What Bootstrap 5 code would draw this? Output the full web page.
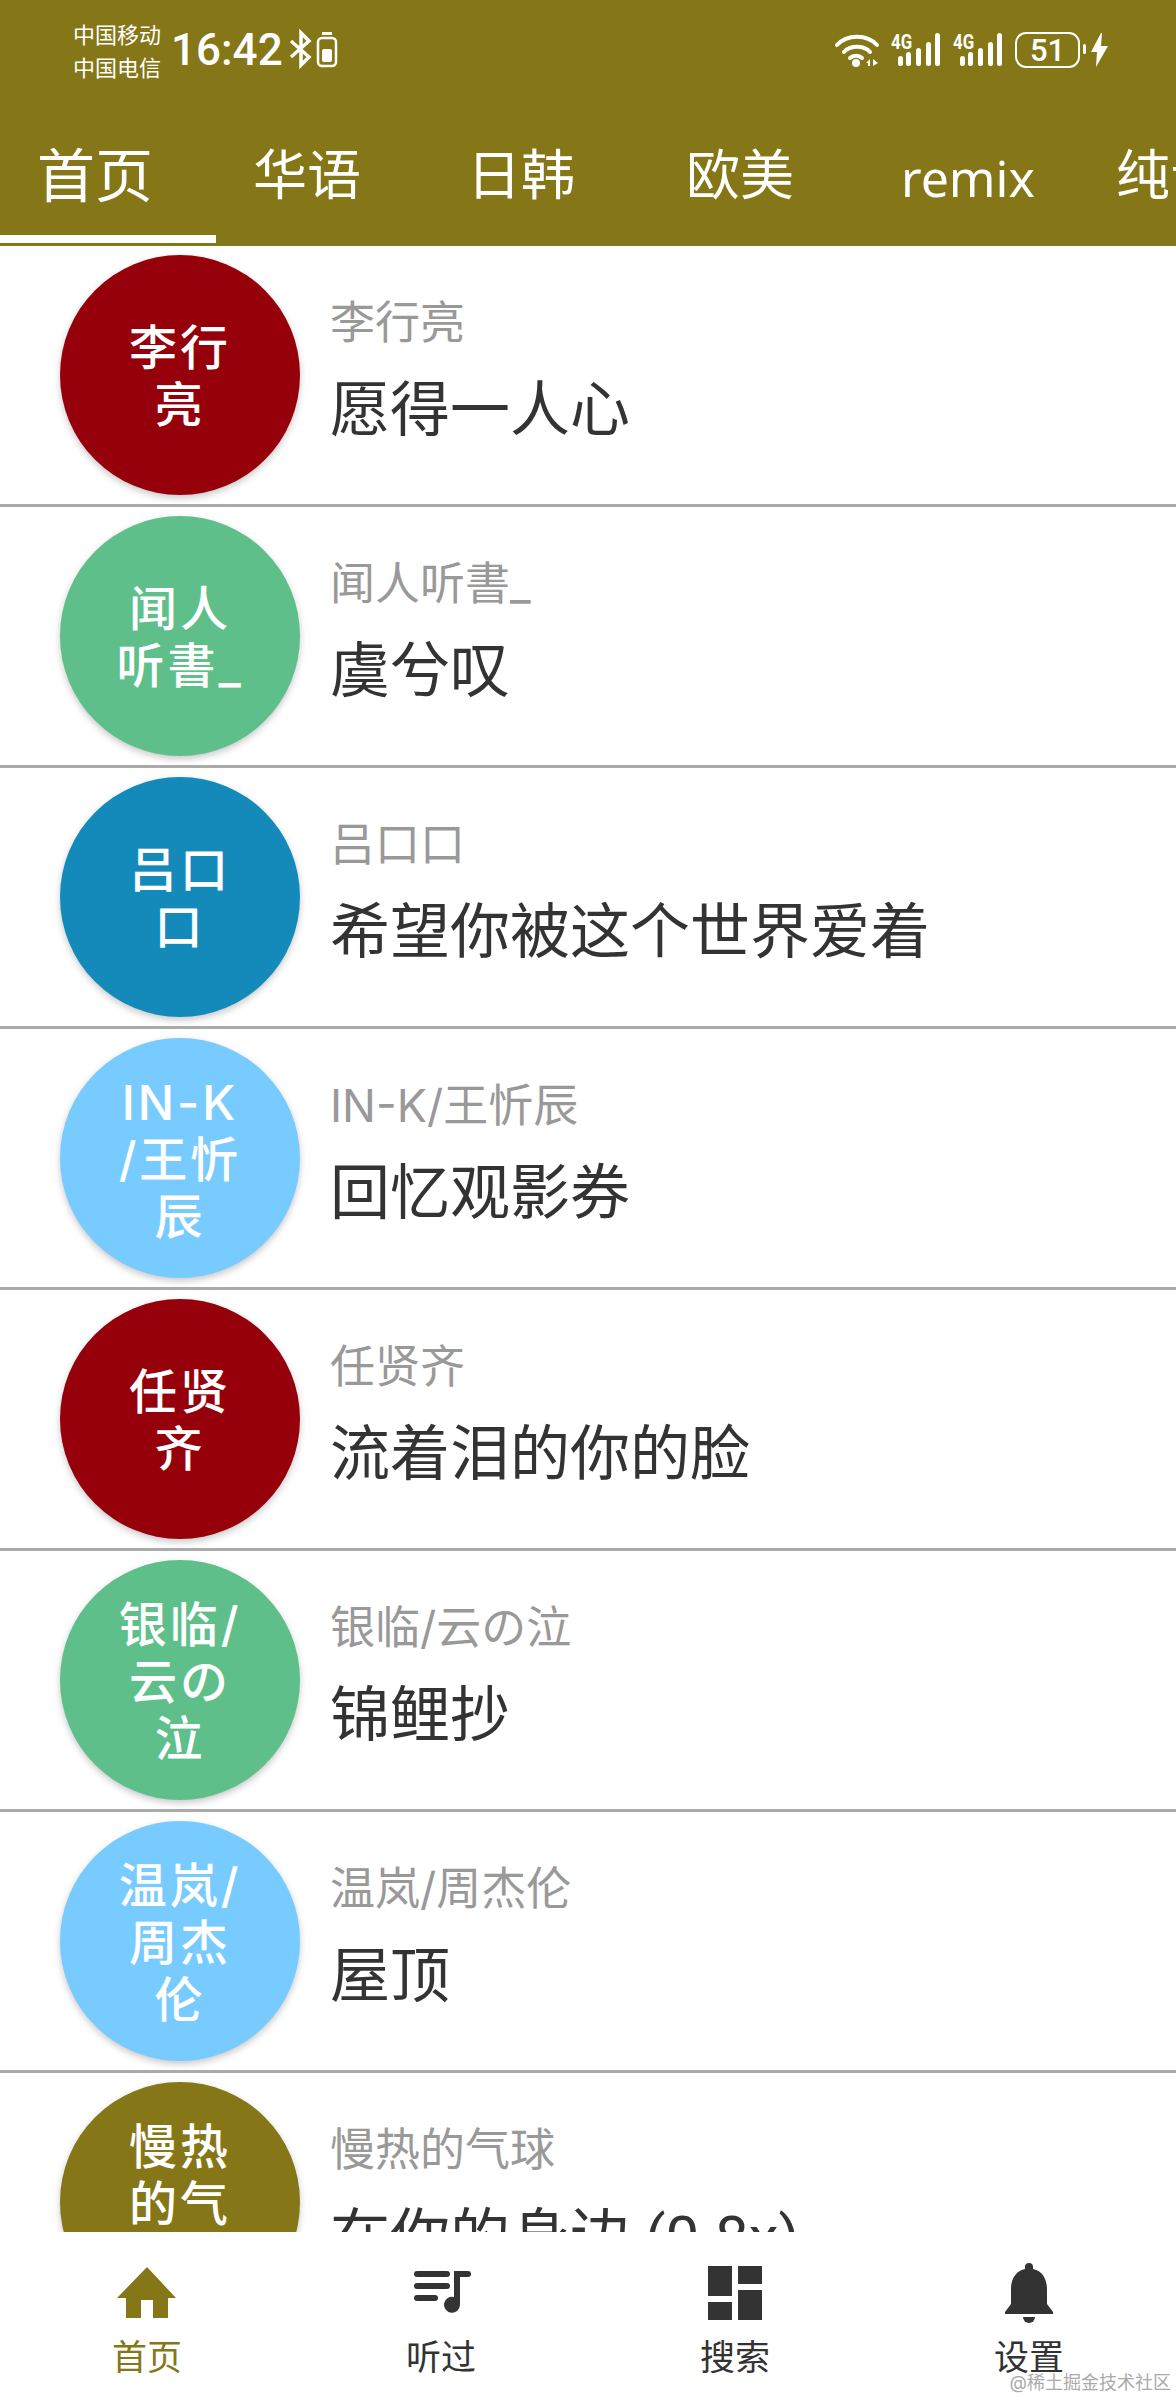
<!DOCTYPE html>
<html lang="zh-CN">
<head>
    <meta charset="UTF-8">
    <meta name="viewport" content="width=device-width, initial-scale=1.0">
    <title>首页</title>
    <link href="https://cdn.jsdelivr.net/npm/bootstrap@5.3.0/dist/css/bootstrap.min.css" rel="stylesheet">
    <style>
        body { font-family: "Inter", "Noto Sans CJK SC", sans-serif; background: #fff; color: #333; }
        .app-shell { width: 1176px; height: 2400px; }
        .top-head { background: #857717; color: #fff; height: 246px; flex: none; }
        .status-row { height: 100px; padding-left: 73px; padding-top: 19px; }
        .carrier { font-size: 22px; line-height: 33px; width: 98px; }
        .clock { font-family: "Roboto", sans-serif; font-size: 44px; font-weight: 500; line-height: 1; width: 116px; margin-top: 9px; }
        .status-right { margin-left: auto; margin-right: 68px; margin-top: 13px; gap: 12px; }
        .sig { position: relative; width: 50px; height: 36px; }
        .sig svg { position: absolute; left: 0; top: 0; }
        .sig-label { position: absolute; left: 0; top: 0; font-family: "Roboto", sans-serif; font-size: 21px; font-weight: 700; line-height: 1; transform: scaleX(.8); transform-origin: left top; }
        .batt { width: 65px; height: 36px; border: 2.5px solid #fff; border-radius: 11px; font-family: "Roboto", sans-serif; font-size: 31px; font-weight: 500; line-height: 1; }
        .bolt-ico { margin-left: -9px; }
        .tab-rail { height: 146px; white-space: nowrap; }
        .tab-item { font-size: 54px; line-height: 1; height: 143px; padding-top: 49px; position: relative; flex: none; }
        .tab-item.on { font-size: 58px; padding-top: 47px; padding-left: 37px; width: 216px; }
        .tab-item.on::after { content: ""; position: absolute; left: 0; right: 0; bottom: 0; height: 8px; background: #fff; }
        .tab-hua { margin-left: 37px; width: 214px; }
        .tab-ri { width: 219px; }
        .tab-ou { width: 215px; }
        .tab-mix { width: 215px; font-family: "Noto Sans", sans-serif; font-size: 50px; padding-top: 53px; }
        .song-list { min-height: 0; }
        .song-row { height: 261px; padding: 9px 0 9px 60px; border-bottom: 3px solid #aaa; flex: none; }
        .avatar-disc { width: 240px; height: 240px; padding-top: 2px; border-radius: 50%; color: #fff; font-size: 48px; font-weight: 500; line-height: 57px; letter-spacing: 3px; text-align: center; box-shadow: 0 3px 7px rgba(0,0,0,.22); flex: none; }
        .disc-red { background: #96000b; }
        .disc-green { background: #5ebf8b; }
        .disc-blue { background: #148abb; }
        .disc-sky { background: #78cbff; }
        .disc-olive { background: #857717; }
        .song-text { margin-left: 30px; padding-bottom: 8px; }
        .song-artist { font-size: 45px; line-height: 60px; color: #999; margin-bottom: 20px; }
        .song-name { font-family: "Roboto", "Noto Sans CJK SC", sans-serif; font-size: 60px; line-height: 76px; color: #333; }
        .bottom-nav { height: 168px; flex: none; background: #fff; position: relative; }
        .nav-cell { width: 294px; height: 168px; }
        .nav-ico { height: 60px; margin-top: 31px; }
        .music-ico { margin-left: 3px; }
        .nav-text { font-size: 35px; line-height: 40px; margin-top: 14px; color: #333; }
        .nav-cell.on .nav-text { color: #857717; }
        .mark-water { position: absolute; right: 5px; bottom: 6px; font-size: 18px; line-height: 22px; color: #aaa; }
    </style>
</head>
<body>
    <div class="app-shell d-flex flex-column overflow-hidden">
        <header class="top-head">
            <div class="status-row d-flex">
                <div class="carrier">中国移动<br>中国电信</div>
                <div class="clock">16:42</div>
                <svg width="52" height="44" viewBox="0 0 52 44" class="mt-2" fill="none" stroke="#fff">
                    <path d="M4 14 L22 30 L14 38 V6 L22 14 L4 30" stroke-width="3.5"/>
                    <rect x="31" y="11" width="18" height="28" rx="4" stroke-width="2.5"/>
                    <rect x="35" y="5" width="10" height="3" fill="#fff" stroke="none"/>
                    <rect x="35" y="22" width="10" height="13" rx="2" fill="#fff" stroke="none"/>
                </svg>
                <div class="status-right d-flex align-items-start">
                    <svg width="44" height="36" viewBox="0 0 44 36" fill="none" stroke="#fff" stroke-width="4" stroke-linecap="round">
                        <path d="M2 13 C12 2 32 2 42 13"/>
                        <path d="M9 20 C15 13 29 13 35 20"/>
                        <path d="M15 26 C18 23 24 23 27 26"/>
                        <circle cx="21" cy="31" r="4" fill="#fff" stroke="none"/>
                        <path d="M31 31 L35 27 V34 H33 V31Z M38 27 L43 31 L38 34Z" fill="#fff" stroke="none"/>
                    </svg>
                    <div class="sig">
                        <svg width="50" height="36" viewBox="0 0 50 36" fill="#fff">
                            <rect x="7" y="24" width="5" height="10" rx="2.5"/>
                            <rect x="15" y="20" width="5" height="14" rx="2.5"/>
                            <rect x="25" y="16" width="5" height="18" rx="2.5"/>
                            <rect x="35" y="10" width="5" height="24" rx="2.5"/>
                            <rect x="44" y="1" width="5" height="33" rx="2.5"/>
                        </svg>
                        <span class="sig-label">4G</span>
                    </div>
                    <div class="sig">
                        <svg width="50" height="36" viewBox="0 0 50 36" fill="#fff">
                            <rect x="7" y="24" width="5" height="10" rx="2.5"/>
                            <rect x="15" y="20" width="5" height="14" rx="2.5"/>
                            <rect x="25" y="16" width="5" height="18" rx="2.5"/>
                            <rect x="35" y="10" width="5" height="24" rx="2.5"/>
                            <rect x="44" y="1" width="5" height="33" rx="2.5"/>
                        </svg>
                        <span class="sig-label">4G</span>
                    </div>
                    <div class="batt d-flex align-items-center justify-content-center">51</div>
                    <svg class="bolt-ico" width="25" height="36" viewBox="0 0 25 36" fill="#fff">
                        <rect x="0" y="12" width="3" height="10" rx="1.5"/>
                        <path d="M18 1 L8 20 H14 L13 35 L25 14 H18 L19 1Z"/>
                    </svg>
                </div>
            </div>
            <nav class="tab-rail d-flex overflow-hidden">
                <div class="tab-item on">首页</div>
                <div class="tab-item tab-hua">华语</div>
                <div class="tab-item tab-ri">日韩</div>
                <div class="tab-item tab-ou">欧美</div>
                <div class="tab-item tab-mix">remix</div>
                <div class="tab-item">纯音乐</div>
            </nav>
        </header>

        <main class="song-list flex-grow-1 overflow-hidden d-flex flex-column">
            <div class="song-row d-flex align-items-center">
                <div class="avatar-disc disc-red d-flex align-items-center justify-content-center"><span>李行<br>亮</span></div>
                <div class="song-text"><div class="song-artist">李行亮</div><div class="song-name">愿得一人心</div></div>
            </div>
            <div class="song-row d-flex align-items-center">
                <div class="avatar-disc disc-green d-flex align-items-center justify-content-center"><span>闻人<br>听書_</span></div>
                <div class="song-text"><div class="song-artist">闻人听書_</div><div class="song-name">虞兮叹</div></div>
            </div>
            <div class="song-row d-flex align-items-center">
                <div class="avatar-disc disc-blue d-flex align-items-center justify-content-center"><span>吕口<br>口</span></div>
                <div class="song-text"><div class="song-artist">吕口口</div><div class="song-name">希望你被这个世界爱着</div></div>
            </div>
            <div class="song-row d-flex align-items-center">
                <div class="avatar-disc disc-sky d-flex align-items-center justify-content-center"><span>IN-K<br>/王忻<br>辰</span></div>
                <div class="song-text"><div class="song-artist">IN-K/王忻辰</div><div class="song-name">回忆观影券</div></div>
            </div>
            <div class="song-row d-flex align-items-center">
                <div class="avatar-disc disc-red d-flex align-items-center justify-content-center"><span>任贤<br>齐</span></div>
                <div class="song-text"><div class="song-artist">任贤齐</div><div class="song-name">流着泪的你的脸</div></div>
            </div>
            <div class="song-row d-flex align-items-center">
                <div class="avatar-disc disc-green d-flex align-items-center justify-content-center"><span>银临/<br>云の<br>泣</span></div>
                <div class="song-text"><div class="song-artist">银临/云の泣</div><div class="song-name">锦鲤抄</div></div>
            </div>
            <div class="song-row d-flex align-items-center">
                <div class="avatar-disc disc-sky d-flex align-items-center justify-content-center"><span>温岚/<br>周杰<br>伦</span></div>
                <div class="song-text"><div class="song-artist">温岚/周杰伦</div><div class="song-name">屋顶</div></div>
            </div>
            <div class="song-row d-flex align-items-center">
                <div class="avatar-disc disc-olive d-flex align-items-center justify-content-center"><span>慢热<br>的气<br>球</span></div>
                <div class="song-text"><div class="song-artist">慢热的气球</div><div class="song-name">在你的身边 (0.8x)</div></div>
            </div>
        </main>

        <footer class="bottom-nav d-flex">
            <div class="nav-cell on d-flex flex-column align-items-center">
                <div class="nav-ico d-flex align-items-center">
                    <svg width="60" height="52" viewBox="0 0 60 52" fill="#857717"><path d="M30 0 L59 31 H51 V51 H36 V33 H24 V51 H9 V31 H0Z"/></svg>
                </div>
                <div class="nav-text">首页</div>
            </div>
            <div class="nav-cell d-flex flex-column align-items-center">
                <div class="nav-ico d-flex align-items-center">
                    <svg class="music-ico" width="58" height="44" viewBox="0 0 58 44" fill="#333">
                        <rect x="0" y="0" width="36" height="6" rx="3"/>
                        <rect x="0" y="12" width="36" height="6" rx="3"/>
                        <rect x="0" y="24" width="24" height="6" rx="3"/>
                        <path d="M40 0 H54 A3 3 0 0 1 54 6 H46 V34 A8 8 0 1 1 40 26Z"/>
                    </svg>
                </div>
                <div class="nav-text">听过</div>
            </div>
            <div class="nav-cell d-flex flex-column align-items-center">
                <div class="nav-ico d-flex align-items-center">
                    <svg width="54" height="54" viewBox="0 0 54 54" fill="#333">
                        <rect x="0" y="0" width="24" height="30"/>
                        <rect x="0" y="36" width="24" height="18"/>
                        <rect x="30" y="0" width="24" height="18"/>
                        <rect x="30" y="24" width="24" height="30"/>
                    </svg>
                </div>
                <div class="nav-text">搜索</div>
            </div>
            <div class="nav-cell d-flex flex-column align-items-center">
                <div class="nav-ico d-flex align-items-center">
                    <svg width="48" height="60" viewBox="0 0 48 60" fill="#333">
                        <path d="M24 0 A4 4 0 0 1 28 4 V6 C38 8 42 17 42 26 V41 L48 49 V51 H0 V49 L6 41 V26 C6 17 10 8 20 6 V4 A4 4 0 0 1 24 0Z"/>
                        <path d="M18 54 H30 A6 6 0 0 1 18 54Z"/>
                    </svg>
                </div>
                <div class="nav-text">设置</div>
            </div>
            <div class="mark-water">@稀土掘金技术社区</div>
        </footer>
    </div>
    <script src="https://cdn.jsdelivr.net/npm/bootstrap@5.3.0/dist/js/bootstrap.bundle.min.js"></script>
</body>
</html>
